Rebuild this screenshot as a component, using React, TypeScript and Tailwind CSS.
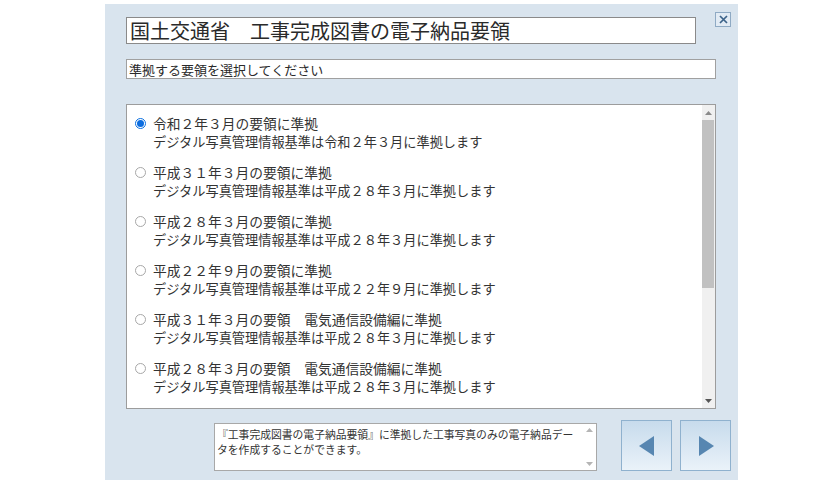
import React from "react";

const items = [
  ["令和２年３月の要領に準拠", "デジタル写真管理情報基準は令和２年３月に準拠します"],
  ["平成３１年３月の要領に準拠", "デジタル写真管理情報基準は平成２８年３月に準拠します"],
  ["平成２８年３月の要領に準拠", "デジタル写真管理情報基準は平成２８年３月に準拠します"],
  ["平成２２年９月の要領に準拠", "デジタル写真管理情報基準は平成２２年９月に準拠します"],
  ["平成３１年３月の要領　電気通信設備編に準拠", "デジタル写真管理情報基準は平成２８年３月に準拠します"],
  ["平成２８年３月の要領　電気通信設備編に準拠", "デジタル写真管理情報基準は平成２８年３月に準拠します"],
];

const font = { fontFamily: '"Noto Sans CJK JP", "Noto Sans", sans-serif' };

export default function App() {
  return (
    <div className="w-[839px] h-[480px] bg-white flex overflow-hidden" style={font}>
      <div className="ml-[105px] mt-[4px] w-[633px] h-[476px] bg-[#d9e4ee] flex flex-col pl-[21px] pt-[8px]">
        <div className="flex items-start">
          <div className="mt-[5px] w-[570px] h-[27px] bg-white border border-[#8a8a8a] flex items-center pl-[3px] text-[20px] leading-none text-[#2a2a2a]">
            国土交通省　工事完成図書の電子納品要領
          </div>
          <div className="ml-[19px] w-[16px] h-[15px] border border-[#8faac4] bg-[#e2ebf4] flex items-center justify-center">
            <svg width="9" height="9" viewBox="0 0 9 9">
              <path d="M1 1 L8 8 M8 1 L1 8" stroke="#3d6389" strokeWidth="1.7" />
            </svg>
          </div>
        </div>
        <div className="mt-[15px] w-[590px] h-[20px] bg-white border border-[#a0a0a0] flex items-center pl-[2px] text-[13px] leading-none text-[#2a2a2a]">
          準拠する要領を選択してください
        </div>
        <div className="mt-[25px] w-[590px] h-[305px] bg-white border border-[#9c9c9c] flex">
          <div className="flex-1 flex flex-col pt-[9px] gap-[13px]">
            {items.map(([a, b], i) => (
              <div key={i} className="flex">
                <div className="w-[26px] h-[18px] flex items-center justify-center">
                  {i === 0 ? (
                    <div className="w-[11px] h-[11px] rounded-full border border-[#0a6fe0] flex items-center justify-center">
                      <div className="w-[7px] h-[7px] rounded-full bg-[#0b6de0]" />
                    </div>
                  ) : (
                    <div className="w-[11px] h-[11px] rounded-full border border-[#a8a8a8] bg-white" />
                  )}
                </div>
                <p className="h-[36px] text-[13.2px] leading-[18px] whitespace-nowrap text-[#333]">
                  <span className="text-[13.75px]">{a}</span>
                  <br />
                  {b}
                </p>
              </div>
            ))}
          </div>
          <div className="w-[13px] bg-[#f0f0f0] flex flex-col">
            <div className="h-[15px] flex items-center justify-center">
              <svg width="7" height="4" viewBox="0 0 7 4"><path d="M0 4 L3.5 0 L7 4 Z" fill="#8a8a8a" /></svg>
            </div>
            <div className="h-[168px] mr-[1px] bg-[#c1c1c1]" />
            <div className="flex-1" />
            <div className="h-[15px] flex items-center justify-center">
              <svg width="7" height="4" viewBox="0 0 7 4"><path d="M0 0 L7 0 L3.5 4 Z" fill="#555" /></svg>
            </div>
          </div>
        </div>
        <div className="mt-[11px] flex items-start">
          <div className="ml-[88px] mt-[3px] w-[383px] h-[48px] bg-white border border-[#a8a8a8] flex">
            <div className="flex-1 pl-[2px] pt-[3px] text-[10.8px] leading-[15px] text-[#333]">
              『工事完成図書の電子納品要領』に準拠した工事写真のみの電子納品デー<br />タを作成することができます。
            </div>
            <div className="w-[13px] flex flex-col justify-between py-[4px]">
              <div className="flex justify-center">
                <svg width="7" height="4" viewBox="0 0 7 4"><path d="M0 4 L3.5 0 L7 4 Z" fill="#b5b5b5" /></svg>
              </div>
              <div className="flex justify-center">
                <svg width="7" height="4" viewBox="0 0 7 4"><path d="M0 0 L7 0 L3.5 4 Z" fill="#b5b5b5" /></svg>
              </div>
            </div>
          </div>
          <div className="ml-[24px] w-[51px] h-[51px] border border-[#8fb1ce] bg-gradient-to-b from-[#c7dbec] to-[#eaf2f9] flex items-center justify-center">
            <svg width="16" height="20" viewBox="0 0 16 20"><path d="M15 0 L15 20 L0 10 Z" fill="#5786b1" /></svg>
          </div>
          <div className="ml-[8px] w-[51px] h-[51px] border border-[#8fb1ce] bg-gradient-to-b from-[#c7dbec] to-[#eaf2f9] flex items-center justify-center">
            <svg width="16" height="20" viewBox="0 0 16 20"><path d="M1 0 L1 20 L16 10 Z" fill="#5786b1" /></svg>
          </div>
        </div>
      </div>
    </div>
  );
}
